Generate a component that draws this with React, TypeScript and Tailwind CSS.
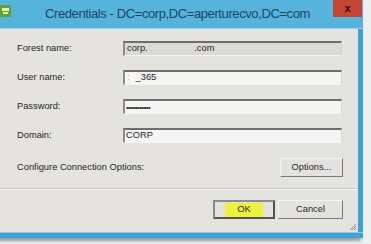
export default function App() {
  const font = { fontFamily: '"Liberation Sans", Arial, sans-serif' };
  const fieldBorder =
    "border-t-2 border-l-2 border-r border-b border-t-[#6e6e6e] border-l-[#8c8c8c] border-r-[#d6d6d6] border-b-[#f4f4f4]";

  return (
    <div className="w-[371px] h-[244px] bg-[#eef0f0] overflow-hidden" style={font}>
      {/* Window */}
      <div className="w-[363px] flex flex-col shadow-[-2px_3px_3px_rgba(0,0,0,0.35)]">
        {/* Title bar */}
        <div className="h-[29px] bg-[#55b3dc] flex items-start relative border-b border-b-[#9fd2ea]">
          <svg width="11" height="12" viewBox="0 0 11 12" className="mt-[5px]">
            <rect x="0" y="0" width="11" height="12" fill="#5ea33a" />
            <rect x="2" y="3" width="7" height="3" fill="#e9f2b0" />
            <rect x="3" y="7" width="5" height="2" fill="#e9f2b0" />
          </svg>
          <div className="absolute left-[45px] top-[5px] text-[13px] leading-[18px] text-[#1d4766] whitespace-nowrap tracking-[-0.4px]">
            Credentials - DC=corp,DC=aperturecvo,DC=com
          </div>
          <div className="absolute right-[1px] top-0 w-[29px] h-[17px] bg-[#c64434] flex items-center justify-center text-[#2a1010] text-[11px] font-bold leading-none">
            x
          </div>
        </div>

        <div className="flex">
          {/* Body */}
          <div className="w-[358px] h-[203px] bg-[#e5e3e0] flex flex-col text-[9.3px] text-[#262626]">
            <div className="flex flex-col gap-[14px] mt-[12px] pl-[17px] pr-[16px]">
              <div className="flex items-center h-[15px]">
                <div className="w-[106px]">Forest name:</div>
                <div className={`flex-1 h-[15px] bg-[#dcdad6] flex items-center pl-[2px] ${fieldBorder}`}>
                  <span>corp.</span>
                  <span className="ml-[2px] text-[#b0b0b0]">:</span>
                  <span className="ml-[42px]">.com</span>
                </div>
              </div>
              <div className="flex items-center h-[15px]">
                <div className="w-[106px]">User name:</div>
                <div className={`flex-1 h-[15px] bg-[#f6f5f3] flex items-center pl-[2px] ${fieldBorder}`}>
                  <span className="text-[#b8b8b8]">:</span>
                  <span className="ml-[6px]">_365</span>
                </div>
              </div>
              <div className="flex items-center h-[15px]">
                <div className="w-[106px]">Password:</div>
                <div className={`flex-1 h-[15px] bg-[#f6f5f3] flex items-center pl-[1px] ${fieldBorder}`}>
                  <span className="text-[7px] tracking-[-0.6px] leading-none">•••••••••••••</span>
                </div>
              </div>
              <div className="flex items-center h-[15px]">
                <div className="w-[106px]">Domain:</div>
                <div className={`flex-1 h-[15px] bg-[#f6f5f3] flex items-center pl-[1px] ${fieldBorder}`}>
                  <span>CORP</span>
                </div>
              </div>
            </div>

            <div className="flex items-center justify-between mt-[15px] pl-[17px] pr-[15px]">
              <div>Configure Connection Options:</div>
              <div className="w-[63px] h-[19px] bg-[#e3e2e0] border border-t-[#f4f4f4] border-l-[#f4f4f4] border-r-[#7a7a7a] border-b-[#7a7a7a] flex items-center justify-center">
                Options...
              </div>
            </div>

            <div className="mt-[11px] h-[2px] border-t border-t-[#cac8c5] border-b border-b-[#f7f6f4]" />

            <div className="flex justify-end gap-[3px] mt-[10px] pr-[15px]">
              <div className="w-[62px] h-[19px] bg-[#e3e2e0] border-2 border-t-[#8a8a8a] border-l-[#8a8a8a] border-r-[#555] border-b-[#555] flex items-center justify-center">
                <div className="w-[38px] h-[14px] bg-[#eef23a] flex items-center justify-center">OK</div>
              </div>
              <div className="w-[65px] h-[19px] bg-[#e3e2e0] border border-t-[#f4f4f4] border-l-[#f4f4f4] border-r-[#7a7a7a] border-b-[#7a7a7a] flex items-center justify-center">
                Cancel
              </div>
            </div>

            <div className="flex justify-end pr-[1px] mt-[3px]">
              <svg width="9" height="9" viewBox="0 0 9 9">
                <path d="M8 2 L2 8 M8 4 L4 8 M8 6 L6 8" stroke="#8a8a8a" strokeWidth="0.9" />
              </svg>
            </div>
          </div>
          {/* Right frame */}
          <div className="w-[5px] bg-[#3ea3d3]" />
        </div>
        {/* Bottom frame */}
        <div className="h-[6px] bg-[#3ea3d3] border-t border-t-[#8fcbe8]" />
      </div>
    </div>
  );
}
